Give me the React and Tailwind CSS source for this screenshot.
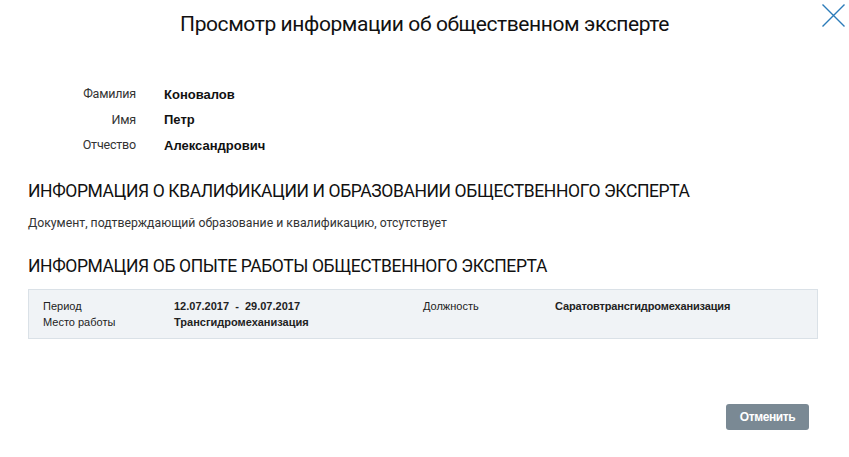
import React from "react";

const person = [
  { label: "Фамилия", value: "Коновалов" },
  { label: "Имя", value: "Петр" },
  { label: "Отчество", value: "Александрович" },
];

export default function App() {
  return (
    <div className="relative w-[849px] h-[457px] bg-white text-[#222] font-['Roboto',sans-serif]">
      {/* close */}
      <button className="absolute right-[3px] top-[3px] w-[25px] h-[25px] text-[#2b7bb9]">
        <svg width="25" height="25" viewBox="0 0 25 25" fill="none" stroke="currentColor" strokeWidth="1.4">
          <path d="M1.5 1.5 L23.5 23.5 M23.5 1.5 L1.5 23.5" />
        </svg>
      </button>

      <h1 className="pt-[9px] text-center text-[21px] leading-[30px] tracking-[-0.4px] text-[#111]">
        Просмотр информации об общественном эксперте
      </h1>

      {/* ФИО */}
      <div className="mt-[45px] flex flex-col gap-[4.5px]">
        {person.map((p) => (
          <div key={p.label} className="flex items-center h-[21px]">
            <div className="w-[136px] text-right text-[12.5px] tracking-[-0.2px] text-[#333]">{p.label}</div>
            <div className="pl-[28px] text-[13px] font-bold font-['Liberation_Sans',sans-serif] text-[#111]">
              {p.value}
            </div>
          </div>
        ))}
      </div>

      <div className="px-[28px]">
        <h2 className="mt-[23px] text-[17.5px] leading-[24px] uppercase text-[#111] tracking-[-0.4px]">
          Информация о квалификации и образовании общественного эксперта
        </h2>
        <p className="mt-[12px] text-[12.25px] leading-[16px] text-[#333]">
          Документ, подтверждающий образование и квалификацию, отсутствует
        </p>
        <h2 className="mt-[23px] text-[17.5px] leading-[24px] uppercase text-[#111] tracking-[-0.4px]">
          Информация об опыте работы общественного эксперта
        </h2>

        <div className="mt-[11px] w-[790px] h-[50px] bg-[#f0f3f6] border border-[#dae1e7] px-[14px] pt-[8px] font-['Liberation_Sans',sans-serif] text-[11px] leading-[16px] text-[#222]">
          <div className="flex">
            <div className="w-[131px]">Период</div>
            <div className="w-[249px] font-bold">12.07.2017&nbsp; - &nbsp;29.07.2017</div>
            <div className="w-[132px]">Должность</div>
            <div className="font-bold tracking-[-0.15px]">Саратовтрансгидромеханизация</div>
          </div>
          <div className="flex">
            <div className="w-[131px]">Место работы</div>
            <div className="font-bold">Трансгидромеханизация</div>
          </div>
        </div>
      </div>

      <div className="absolute left-[726px] top-[404px]">
        <button className="w-[83px] h-[26px] rounded-[3px] bg-[#7a8994] text-white text-[12px] tracking-[-0.4px] font-bold font-['Liberation_Sans',sans-serif]">
          Отменить
        </button>
      </div>
    </div>
  );
}
